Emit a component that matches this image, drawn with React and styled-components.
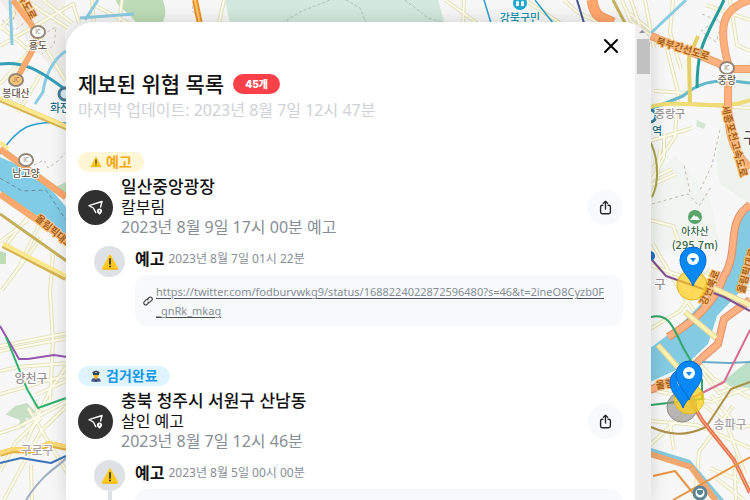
import React from "react";
import styled, { createGlobalStyle } from "styled-components";

const GlobalStyle = createGlobalStyle`
  *, *::before, *::after { box-sizing: border-box; }
  body {
    margin: 0;
    overflow: hidden;
    background: #f5f6f5;
    color: #111;
    font-family: "Noto Sans", "Noto Sans CJK KR", sans-serif;
  }
  h1, h2, p, ul { margin: 0; padding: 0; }
  button { border: 0; padding: 0; cursor: pointer; }
`;

const Page = styled.div`
  position: relative;
  display: flex;
  height: 100vh;
  padding: 22px 99px 0 66px;
`;

const MapCanvas = styled.svg`
  position: absolute;
  inset: 0;
  width: 100%;
  height: 100%;
  font-family: "Noto Sans CJK KR", sans-serif;
`;

const Panel = styled.main`
  position: relative;
  flex: 1;
  min-width: 0;
  display: flex;
  overflow: hidden;
  background: #fff;
  border-radius: 28px 28px 0 0;
  box-shadow: 0 0 18px rgba(0, 0, 0, 0.16);
`;

const Content = styled.div`
  flex: 1;
  min-width: 0;
  padding: 12px 12px 0;
  overflow: hidden;
`;

const ScrollTrack = styled.div`
  flex: none;
  width: 16px;
  display: flex;
  flex-direction: column;
  align-items: center;
  background: #f0f0f0;
`;

const ScrollArrow = styled.svg`
  flex: none;
  width: 16px;
  height: 17px;
`;

const ScrollThumb = styled.div`
  width: 13px;
  height: 35px;
  background: #c1c1c1;
`;

const TopBar = styled.div`
  display: flex;
  justify-content: flex-end;
`;

const CloseButton = styled.button`
  display: flex;
  background: none;
`;

const Header = styled.header`
  padding-top: 12px;
  margin-bottom: 30px;
`;

const TitleRow = styled.div`
  display: flex;
  align-items: center;
  gap: 9px;
  height: 28px;
`;

const Title = styled.h1`
  font-size: 21px;
  line-height: 28px;
  font-weight: 500;
  white-space: nowrap;
`;

const Count = styled.span`
  padding: 0 12px;
  border-radius: 10px;
  background: #fa4149;
  color: #fff;
  font-family: Inter, "Noto Sans CJK KR", sans-serif;
  font-size: 10px;
  line-height: 20px;
  font-weight: 900;
`;

const Updated = styled.p`
  color: #ced2d6;
  font-size: 16px;
  line-height: 24px;
`;

const Report = styled.article`
  margin-bottom: 40px;
`;

const Tag = styled.div`
  display: flex;
  align-items: center;
  gap: 4px;
  width: fit-content;
  height: 20px;
  padding: 0 12px;
  border-radius: 10px;
  background: ${(p) => (p.$done ? "#def4ff" : "#fff6d5")};
  color: ${(p) => (p.$done ? "#1597e8" : "#f5a70b")};
  font-size: 14px;
  line-height: 20px;
  font-weight: 700;
`;

const Summary = styled.div`
  display: flex;
  align-items: center;
  gap: 8px;
  margin-top: 5px;
`;

const PlaceIcon = styled.span`
  flex: none;
  display: grid;
  place-items: center;
  width: 35px;
  height: 35px;
  border-radius: 50%;
  background: #303030;
`;

const SummaryText = styled.div`
  flex: 1;
  min-width: 0;
  font-size: 16px;
  line-height: 20px;
`;

const Place = styled.h2`
  font-size: 17px;
  line-height: 20px;
  font-weight: 500;
`;

const When = styled.p`
  color: #868e96;
`;

const ShareButton = styled.button`
  flex: none;
  display: grid;
  place-items: center;
  width: 35px;
  height: 35px;
  border-radius: 50%;
  background: #f8f9fa;
`;

const Event = styled.section`
  display: flex;
  gap: 10px;
  margin: 9px 0 0 16px;
`;

const EventRail = styled.div`
  flex: none;
  display: flex;
  flex-direction: column;
  align-items: center;
  width: 31px;
`;

const EventBadge = styled.span`
  flex: none;
  display: grid;
  place-items: center;
  width: 31px;
  height: 31px;
  border-radius: 50%;
  background: #dee2e6;
`;

const RailLine = styled.span`
  flex: 1;
  width: 4px;
  background: #dee2e6;
`;

const EventBody = styled.div`
  flex: 1;
  min-width: 0;
`;

const EventHead = styled.p`
  display: flex;
  align-items: center;
  gap: 4px;
  height: 24px;
  margin-bottom: 5px;
  color: #868e96;
  font-size: 12px;
`;

const EventName = styled.strong`
  color: #111;
  font-size: 16px;
  font-weight: 700;
`;

const LinkBox = styled.div`
  display: flex;
  align-items: center;
  gap: 3px;
  padding: 7px 16px 6px 8px;
  border-radius: 12px;
  background: #f8f9fa;
`;

const SourceLink = styled.a`
  min-width: 0;
  color: #868e96;
  font-size: 11px;
  line-height: 19px;
  text-decoration: underline;
  text-decoration-color: #495057;
  text-underline-offset: 2px;
  word-break: break-all;
`;

const Drawing = styled.svg`
  flex: none;
  display: block;
`;

function Warning({ size }) {
  return (
    <Drawing width={size} height={size} viewBox="0 0 18 18" aria-hidden="true">
      <path d="M9 2.2 16.4 15.6H1.6Z" fill="#ffc91b" stroke="#ffc91b" strokeWidth="1.6" strokeLinejoin="round" />
      <path d="M2 16H16" stroke="#edaa10" strokeWidth="1" strokeLinecap="round" />
      <path d="M9 5.8V11" stroke="#343234" strokeWidth="1.7" strokeLinecap="round" />
      <circle cx="9" cy="13.6" r="1" fill="#343234" />
    </Drawing>
  );
}

function Officer() {
  return (
    <Drawing width="12" height="12" viewBox="0 0 16 16" aria-hidden="true">
      <path d="M2 15.5v-1.7c0-2 2-3 4-3h4c2 0 4 1 4 3v1.7Z" fill="#465b99" />
      <path d="M6 9h4v3l-2 1.5L6 12Z" fill="#dfa22c" />
      <circle cx="8" cy="6.7" r="3.7" fill="#f7bd38" />
      <path d="M3 2.7 8 .5l5 2.2-1.1 3.1H4.1Z" fill="#354373" />
      <path d="M4.4 6h7.2" stroke="#26345a" strokeWidth="1.4" />
      <circle cx="8" cy="3.2" r="1" fill="#ffc936" />
      <path d="m7.3 12 .7.7.7-.7.5 3.5H6.8Z" fill="#263352" />
    </Drawing>
  );
}

function Navigate() {
  return (
    <Drawing width="17" height="17" viewBox="0 0 17 17" fill="none" aria-hidden="true">
      <path d="M13.6 8 15 2.5 2 6.6 6.3 9l2.5 4.6" stroke="#fff" strokeWidth="1.4" strokeLinejoin="round" strokeLinecap="round" />
      <path d="M12.5 15.8c-1.7-1.5-2.6-2.4-2.6-3.8a2.6 2.6 0 0 1 5.2 0c0 1.4-.9 2.3-2.6 3.8Z" fill="#fff" />
      <circle cx="12.5" cy="12" r=".8" fill="#303030" />
    </Drawing>
  );
}

function Share() {
  return (
    <Drawing width="13" height="15" viewBox="0 0 13 15" fill="none" stroke="#25282b" strokeWidth="1.4" strokeLinecap="round" strokeLinejoin="round" aria-hidden="true">
      <path d="M3.9 5.2H3A1.7 1.7 0 0 0 1.6 7v5.1c0 1 .7 1.7 1.7 1.7h6.4c1 0 1.7-.7 1.7-1.7V7A1.7 1.7 0 0 0 10 5.2H9.1M6.5 9V1.3M4.4 3.2l2.1-2 2.1 2" />
    </Drawing>
  );
}

function Chain() {
  return (
    <Drawing width="10" height="10" viewBox="0 0 12 12" fill="none" stroke="#343a40" strokeWidth="1.3" strokeLinecap="round" aria-hidden="true">
      <path d="M5 4.1 7.1 2A2.3 2.3 0 0 1 10.4 5.3L8.6 7.1a2.2 2.2 0 0 1-2.7.3M7 7.9 4.9 10A2.3 2.3 0 0 1 1.6 6.7L3.4 4.9a2.2 2.2 0 0 1 2.7-.3" />
    </Drawing>
  );
}

const cream = [
  "M0 26 30 51 0 84M26 0 0 30M0 100 45 120M20 0 42 42 65 80M43 70 18 113",
  "M72 23 43 0M79 23 73 4 0 46M92 0 94 23M94 5 130 24M122 0 119 24M224 0 219 23M445 0 477 23M464 0 463 23",
  "M0 242 28 220M31 213 6 245M43 217 20 265M25 0 68 28M53 186 39 219",
  "M2 290 41 238M53 254 50 293 53 340 50 400M0 346 73 332M0 351 73 337M0 371 18 367 70 363M0 394 71 374M36 395 70 379M0 433 18 427 73 398M27 440 50 390 66 367",
  "M4 500 41 431 73 400M0 471 16 442 41 418M31 465 32 500M28 408 68 474M35 400 39 420",
  "M525 0 560 23M564 0 577 12 600 23M631 0 643 35M622 0 631 21 650 35",
  "M630 14 654 33M645 0 654 48M666 45 678 92 675 137 653 168M654 91 688 93M650 141 692 128M692 104 750 108M660 149 657 182 650 198M652 180 664 157 664 134",
  "M651 179 672 169M651 185 676 174M673 0 670 32 681 69M730 0 737 45 750 51M706 5 750 20",
  "M650 220 673 226 690 270M650 265 681 276M653 244 682 294 700 319M650 329 680 311 711 269M690 268 716 282 750 289M677 341 714 379 750 398M704 374 719 393 750 382",
  "M651 390 711 402 750 387M650 421 697 425 750 448M670 424 674 450M650 445 690 408M695 500 699 452 733 406M711 395 738 427 750 426M710 468 750 485M687 392 726 422 745 474M716 478 744 500M734 455 736 500",
];

const labels = [
  [38, 49, "흥도", 10, "#68584c"],
  [16, 97, "봉대산", 10, "#68584c"],
  [26, 177, "남고양", 10, "#68584c"],
  [31, 383, "양천구", 12, "#999193"],
  [37, 455, "구로구", 12, "#aaa09f"],
  [520, 22, "강북구민", 11, "#168fb0"],
  [60, 112, "화전", 11, "#246b88"],
  [727, 84, "중랑", 10, "#68584c"],
  [670, 118, "중랑구", 11, "#999193"],
  [657, 135, "역", 11, "#246b88"],
  [750, 143, "구", 15, "#444"],
  [695, 235, "아차산", 10, "#356345"],
  [695, 249, "(295.7m)", 11, "#356345"],
  [660, 289, "구", 12, "#999193"],
  [730, 429, "송파구", 12, "#aaa1a2"],
];

const roadLabels = [
  [24, 8, 62, "북도로"],
  [52, 234, 40, "올림픽대로"],
  [682, 52, 17, "북부간선도로"],
  [731, 142, 75, "세종포천고속도로"],
  [713, 289, -67, "강변북로"],
  [750, 272, -74, "올림픽대로"],
  [670, 387, -8, "올림픽"],
];

function Pin({ x, y }) {
  return (
    <g transform={`translate(${x} ${y})`}>
      <path d="M0 12C-3 3-13-3-13-14A13 13 0 0 1 13-14C13-3 3 3 0 12Z" fill="#0788f6" stroke="#0568ca" />
      <circle cy="-15" r="6" fill="#fff" />
      <path d="M-3-16H3L0-12Z" fill="#0788f6" />
    </g>
  );
}

function CityMap() {
  return (
    <MapCanvas viewBox="0 0 750 500" preserveAspectRatio="xMidYMid slice" aria-label="지도">
      <path fill="#f7f7f7" d="M0 0H750V500H0Z" />
      <path d="M225 0 230 24H445L438 0Z" fill="#d3e9dd" />
      <path d="M116 0C117 8 129 11 137 24H161C168 15 165 8 163 0Z" fill="#bddcb7" />
      <path d="M0 0H65V80L30 45Z" fill="#f0eeeb" />
      <path d="M732 75C735 105 707 154 721 185L750 204V60Z" fill="#eef3ee" />
      <path d="M651 180 675 155 710 198 719 242 690 258 651 246Z" fill="#f2f4f1" />
      <path d="M5 415 15 406 27 403 35 411 33 420 26 418 25 427 18 429 20 420 7 415Z" fill="#c8dfc5" />
      <path d="m0 251 6 2v11H0Z" fill="#bddcb7" />
      <path d="m697 120 9 4-2 5-8-3Z" fill="#d2e6d2" />
      <g fill="none" strokeLinejoin="round">
        {cream.map((d) => <path key={d} d={d} stroke="#e3e2ba" strokeWidth="4" />)}
        {cream.map((d) => <path key={d + "c"} d={d} stroke="#fffced" strokeWidth="2" />)}
        <path d="M2 20 15 30 29 19M42 35 56 27 54 45 42 54M20 0 12 23M34 165 44 160 48 168 58 161 65 153M195 0 192 10 202 23M702 14 722 23 716 42 701 31 720 18M652 204 688 194 699 206 711 187M690 192 684 165M720 130 712 165 699 192" stroke="#c4b9ab" strokeDasharray="3 3" />
        <path d="M282 23 300 12 330 0M346 0 360 8 366 23M405 0 428 18 445 23" stroke="#abc3b8" strokeDasharray="3 2" />
        <path d="M10 0 12 45M66 51C52 60 45 77 43 92L35 104M85 20 98 0M80 18 134 14M651 33 686 0" stroke="#8bcbe2" strokeWidth="3" />
        <path d="M0 64C30 60 48 78 68 91" stroke="#369db7" strokeWidth="3" />
        <path d="M651 109 683 96C696 85 710 77 750 83" stroke="#63b9ca" strokeWidth="3" />
        <path d="M0 154C18 127 30 120 66 123M484 0 491 23M535 0 553 23" stroke="#2c9ecb" strokeWidth="1.5" />
        <path d="M577 0 584 23" stroke="#47538c" strokeWidth="2" />
      </g>
      <path d="M0 157 38 174 66 207V235L0 191Z" fill="#80cce6" />
      <path d="m53 188 13-6v16Z" fill="#c0dfc0" />
      <path d="M750 210C730 222 733 254 719 280 703 306 674 332 650 348V382L685 366 708 344 717 316 750 281Z" fill="#83cbe3" />
      <path d="M651 448 690 460 707 480 724 500H719L692 468 651 455Z" fill="#86c8de" />
      <path d="m724 380 26-20v28l-20-2Z" fill="#bcdfc7" />
      <g fill="none" strokeLinejoin="round">
        <path d="M0 178 22 191 46 190 66 220" stroke="#698b97" strokeDasharray="4 3" />
        <path d="M0 149 66 197M0 194 66 240" stroke="#e5ae73" strokeWidth="7" />
        <path d="M0 149 66 197M0 194 66 240" stroke="#ffa76c" strokeWidth="5" />
        <path d="M13 0C30 25 37 25 36 44L16 80" stroke="#f8a96d" strokeWidth="6" />
        <path d="M0 99 68 128M3 245 66 278" stroke="#d5b456" strokeWidth="6" />
        <path d="M0 98 68 127M3 244 66 276M0 142 8 149" stroke="#ffe98f" strokeWidth="4" />
        <path d="M0 214 68 262M613 0 625 23" stroke="#c4b05a" strokeWidth="3" />
        <path d="M195 0 200 24" stroke="#e99129" strokeWidth="6" />
        <path d="M195 0 200 24" stroke="#ffc66d" strokeWidth="2" />
        <path d="M592 0C595 19 602 17 613 23" stroke="#f4995f" strokeWidth="11" />
        <path d="M592 0C595 19 602 17 613 23" stroke="#ffa66d" strokeWidth="9" />
        <path d="M0 454 13 450 34 451 49 444 68 448" stroke="#e3ae3f" strokeWidth="6" />
        <path d="M0 453 13 449 34 450 49 443 68 447" stroke="#fdda76" strokeWidth="4" />
        <path d="M0 326 19 359H28L54 355 67 357" stroke="#9656ad" strokeWidth="2" />
        <path d="M6 337 27 389 38 408 66 398" stroke="#2eb16f" strokeWidth="2" />
        <path d="M0 463 21 458 51 463 66 456" stroke="#3e73ba" strokeWidth="2" />
        <path d="M26 500C45 470 62 465 66 458" stroke="#9faec1" strokeWidth="2" />
        <path d="M698 36 689 58 690 104" stroke="#e5d067" strokeWidth="4" />
        <path d="M650 107C680 98 720 112 750 100" stroke="#f0dc75" strokeWidth="4" />
        <path d="M651 36 718 63 728 69H750" stroke="#e9a06f" strokeWidth="8" />
        <path d="M651 36 718 63 728 69H750" stroke="#ffb07c" strokeWidth="6" />
        <path d="M750 0C722 9 718 25 728 64C730 102 720 141 750 168" stroke="#e9a06f" strokeWidth="8" />
        <path d="M750 0C722 9 718 25 728 64C730 102 720 141 750 168" stroke="#ffb07c" strokeWidth="6" />
        <path d="M724 0C706 38 697 45 697 88" stroke="#269d9b" strokeWidth="3" />
        <path d="M651 143C660 164 658 185 652 197" stroke="#a6a34d" strokeWidth="2" />
        <path d="M750 205C725 221 740 251 724 276 713 309 683 328 668 337M650 390 686 374 703 357 718 344 724 319 750 300" stroke="#de8e66" strokeWidth="8" />
        <path d="M750 205C725 221 740 251 724 276 713 309 683 328 668 337M650 390 686 374 703 357 718 344 724 319 750 300" stroke="#ffb181" strokeWidth="6" />
        <path d="M711 287 750 305M658 345 697 389M685 312 716 338" stroke="#d8d1a0" strokeWidth="6" />
        <path d="M711 287 750 305M658 345 697 389M685 312 716 338" stroke="#fff1ae" strokeWidth="4" />
        <path d="M652 260 666 276 703 289 724 297 750 311" stroke="#83518b" strokeWidth="2" />
        <path d="M651 317C670 312 674 330 684 349L702 380V399L651 405" stroke="#32a668" strokeWidth="2" />
        <path d="M702 362 729 363 750 362" stroke="#6aacc8" strokeWidth="2" />
        <path d="M750 330 724 382 692 398" stroke="#d86d91" strokeWidth="2" />
        <path d="M651 427C669 435 685 437 706 427L731 389 750 382" stroke="#aa8f48" strokeWidth="2" />
        <path d="m687 395 15 25 32 40 16 33" stroke="#e67549" strokeWidth="4" />
        <path d="m687 395 15 25 32 40 16 33" stroke="#ffb19a" strokeWidth="1" />
        <path d="m650 454 41 13 25 34" stroke="#f1a870" strokeWidth="6" />
        <path d="m653 476 22-5 18 22M673 500l77-43" stroke="#e69643" strokeWidth="2" />
      </g>
      <g fill="#fff" stroke="#948778" strokeWidth="2">
        <ellipse cx="38" cy="32" rx="7" ry="6" />
        <ellipse cx="16" cy="80" rx="7" ry="6" fill="#fac478" />
        <ellipse cx="26" cy="160" rx="7" ry="6" />
        <ellipse cx="727" cy="68" rx="7" ry="6" />
      </g>
      <g fill="#786b60" fontSize="6" textAnchor="middle">
        <text x="38" y="34">IC</text><text x="16" y="82">JC</text>
        <text x="26" y="162">IC</text><text x="727" y="70">IC</text>
      </g>
      <circle cx="65" cy="94" r="6" fill="#dceef4" stroke="#477b98" strokeWidth="3" />
      <circle cx="520" cy="3" r="7" fill="#1ba9d2" />
      <path d="M516 6V3c0-3 3-3 3 0v3ZM521 6V3c0-3 3-3 3 0v3Z" fill="#fff" />
      <circle cx="650" cy="116" r="6" fill="#fff" stroke="#347c99" strokeWidth="3" />
      <circle cx="650" cy="256" r="5" fill="#246ec2" />
      <circle cx="695" cy="217" r="7" fill="#59a468" />
      <path d="m690 220 4-5 2 2 1-1 3 4Z" fill="#fff" />
      <circle cx="700" cy="493" r="6" fill="#fff" stroke="#5b8496" strokeWidth="3" />
      <path d="M697 490h6v3l-2 2h-2l-2-2Z" fill="#5b8496" />
      {labels.map(([x, y, text, size, color]) => (
        <text key={text + y} x={x} y={y} textAnchor="middle" fontSize={size} fontWeight="500" fill={color} stroke="#fff" strokeWidth="2" paintOrder="stroke">{text}</text>
      ))}
      {roadLabels.map(([x, y, angle, text]) => (
        <text key={text + y} x={x} y={y} textAnchor="middle" fontSize="10" fontWeight="700" fill="#a76017" stroke="#ffc27f" strokeWidth="2" paintOrder="stroke" transform={`rotate(${angle} ${x} ${y})`}>{text}</text>
      ))}
      <circle cx="692" cy="285" r="15" fill="#ffce1c" fillOpacity=".7" stroke="#e4b31c" />
      <circle cx="682" cy="407" r="15" fill="#8e8989" fillOpacity=".6" stroke="#8d8989" />
      <circle cx="689" cy="399" r="15" fill="#ffd11c" fillOpacity=".75" stroke="#e5b91c" />
      <Pin x={693} y={274} /><Pin x={683} y={396} /><Pin x={689} y={388} />
    </MapCanvas>
  );
}

const reports = [
  {
    tag: "예고",
    place: "일산중앙광장",
    kind: "칼부림",
    when: "2023년 8월 9일 17시 00분 예고",
    eventTime: "2023년 8월 7일 01시 22분",
    link: "https://twitter.com/fodburvwkg9/status/1688224022872596480?s=46&t=2ineO8Cyzb0F_gnRk_mkag",
  },
  {
    tag: "검거완료",
    done: true,
    place: "충북 청주시 서원구 산남동",
    kind: "살인 예고",
    when: "2023년 8월 7일 12시 46분",
    eventTime: "2023년 8월 5일 00시 00분",
  },
];

function ReportItem({ report }) {
  return (
    <Report>
      <Tag $done={report.done}>{report.done ? <Officer /> : <Warning size={12} />}{report.tag}</Tag>
      <Summary>
        <PlaceIcon><Navigate /></PlaceIcon>
        <SummaryText>
          <Place>{report.place}</Place>
          <p>{report.kind}</p>
          <When>{report.when}</When>
        </SummaryText>
        <ShareButton type="button" aria-label="공유"><Share /></ShareButton>
      </Summary>
      <Event>
        <EventRail>
          <EventBadge><Warning size={18} /></EventBadge>
          {report.done && <RailLine />}
        </EventRail>
        <EventBody>
          <EventHead><EventName>예고</EventName><time>{report.eventTime}</time></EventHead>
          <LinkBox>
            <Chain />
            <SourceLink href={report.link || "#"}>{report.link || "\u00a0"}</SourceLink>
          </LinkBox>
        </EventBody>
      </Event>
    </Report>
  );
}

export default function App() {
  return (
    <>
      <GlobalStyle />
      <Page>
        <CityMap />
        <Panel>
          <Content>
            <TopBar>
              <CloseButton type="button" aria-label="닫기">
                <Drawing width="24" height="24" viewBox="0 0 24 24" stroke="#000" strokeWidth="2" strokeLinecap="round">
                  <path d="m6 6 12 12M18 6 6 18" />
                </Drawing>
              </CloseButton>
            </TopBar>
            <Header>
              <TitleRow><Title>제보된 위협 목록</Title><Count>45개</Count></TitleRow>
              <Updated>마지막 업데이트: 2023년 8월 7일 12시 47분</Updated>
            </Header>
            {reports.map((report) => <ReportItem key={report.place} report={report} />)}
          </Content>
          <ScrollTrack aria-hidden="true">
            <ScrollArrow viewBox="0 0 16 17"><path d="m4 11 4-4 4 4Z" fill="#929292" /></ScrollArrow>
            <ScrollThumb />
          </ScrollTrack>
        </Panel>
      </Page>
    </>
  );
}
